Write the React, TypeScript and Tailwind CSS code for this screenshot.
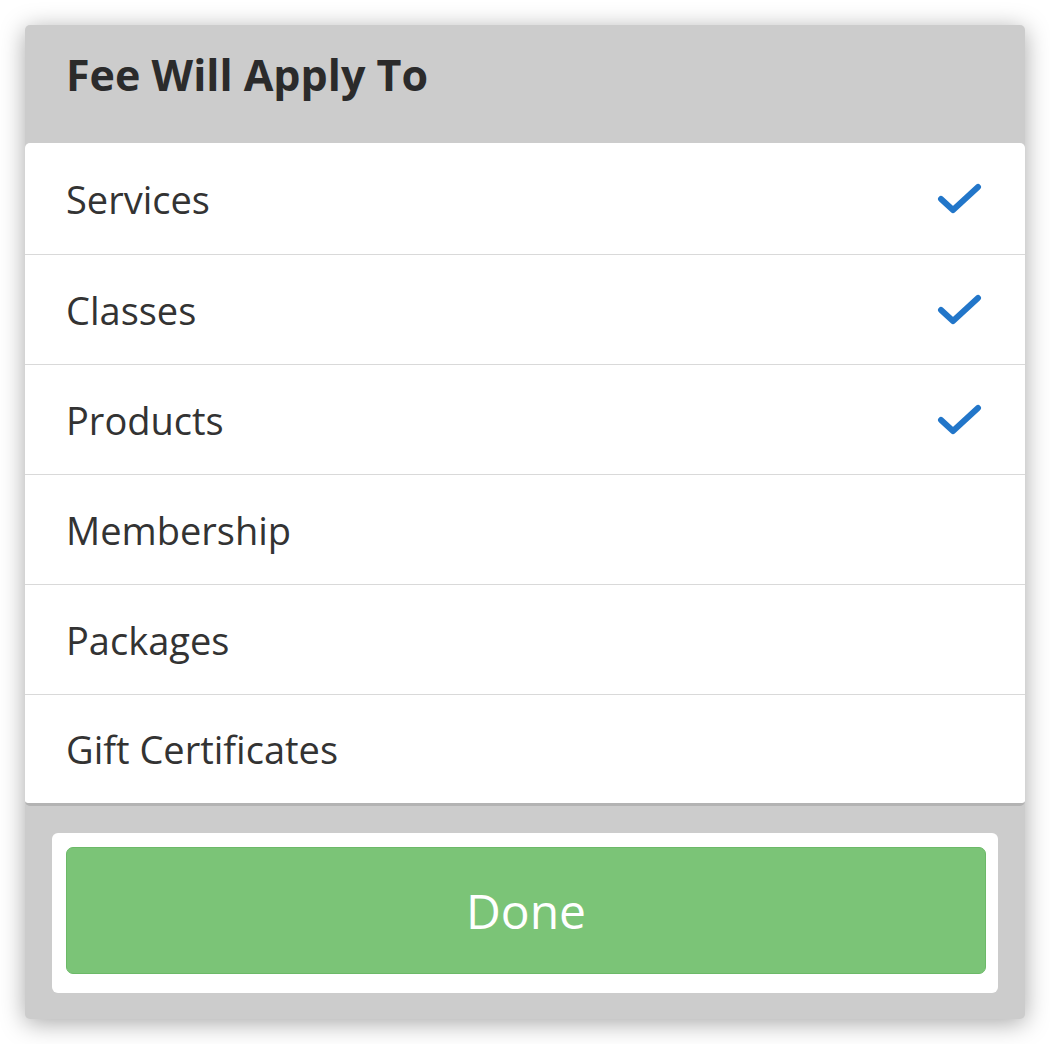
import React from 'react';

const items = [
  { label: 'Services', checked: true },
  { label: 'Classes', checked: true },
  { label: 'Products', checked: true },
  { label: 'Membership', checked: false },
  { label: 'Packages', checked: false },
  { label: 'Gift Certificates', checked: false },
];

function Check() {
  return (
    <svg width="46" height="34" viewBox="0 0 46 34" fill="none">
      <path
        d="M4 17 L16 28 L41 5"
        stroke="#2276c9"
        strokeWidth="6"
        strokeLinecap="round"
        strokeLinejoin="round"
      />
    </svg>
  );
}

export default function App() {
  return (
    <div
      className="w-[1050px] h-[1044px] bg-white pt-[25px] pl-[25px]"
      style={{ fontFamily: '"Open Sans", "Noto Sans", sans-serif' }}
    >
      <div className="w-[1000px] h-[994px] bg-[#cccccc] rounded-[5px] shadow-[0_4px_24px_rgba(0,0,0,0.35)] flex flex-col">
        <div className="h-[118px] pl-[41px] pt-[28px]">
          <h2 className="text-[43px] leading-[43px] font-bold text-[#2b2b2b]">
            Fee Will Apply To
          </h2>
        </div>

        <div className="bg-white rounded-[5px] border-b-[3px] border-[#b3b3b3]">
          {items.map((item, i) => (
            <div
              key={item.label}
              className={`flex items-center justify-between pl-[41px] pr-[42px] ${
                i === 0
                  ? 'h-[112px] border-b border-[#d9d9d9]'
                  : i === items.length - 1
                  ? 'h-[108px]'
                  : 'h-[110px] border-b border-[#d9d9d9]'
              }`}
            >
              <span className="text-[38px] leading-none text-[#333333]">{item.label}</span>
              {item.checked && <Check />}
            </div>
          ))}
        </div>

        <div className="px-[27px] pt-[27px]">
          <div className="bg-white rounded-[6px] p-[14px] pr-[12px] h-[160px]">
            <button className="w-full h-[127px] bg-[#7bc477] border border-[#6cb968] rounded-[7px] text-white text-[48px] leading-none">
              Done
            </button>
          </div>
        </div>
      </div>
    </div>
  );
}
